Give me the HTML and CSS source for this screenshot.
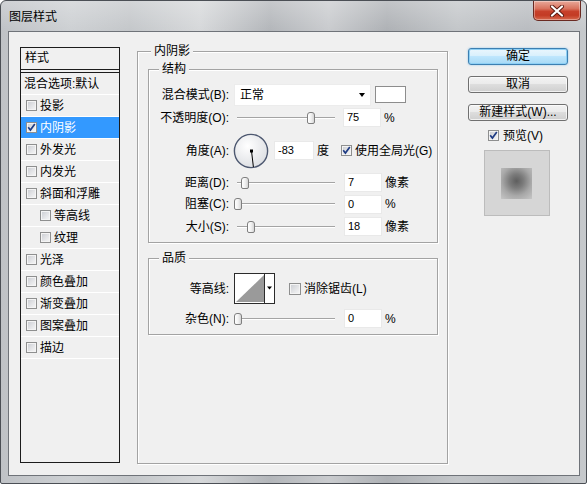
FILE: index.html
```html
<!DOCTYPE html>
<html lang="zh-CN">
<head>
<meta charset="utf-8">
<title>图层样式</title>
<link rel="stylesheet" href="styles.css">
</head>
<body>
<div class="window">
  <div class="titlebar">
    <span class="title">图层样式</span>
    <div class="close">
      <svg width="16" height="12" viewBox="0 0 16 12"><path d="M3 1.5 L13 10.5 M13 1.5 L3 10.5" stroke="#5a1a10" stroke-width="4" stroke-linecap="round"/><path d="M3 1.5 L13 10.5 M13 1.5 L3 10.5" stroke="#fff" stroke-width="2.2" stroke-linecap="round"/></svg>
    </div>
  </div>
  <div class="client">
    <div class="style-list">
      <div class="list-head">样式</div>
      <div class="list-item blend">混合选项:默认</div>
      <div class="list-item"><span class="cb"></span>投影</div>
      <div class="list-item selected"><span class="cb"><svg class="tick" width="9" height="9" viewBox="0 0 9 9"><path d="M1.2 4.2 L3.4 7 L7.8 1" fill="none" stroke="#1f3c84" stroke-width="1.7"/></svg></span>内阴影</div>
      <div class="list-item"><span class="cb"></span>外发光</div>
      <div class="list-item"><span class="cb"></span>内发光</div>
      <div class="list-item"><span class="cb"></span>斜面和浮雕</div>
      <div class="list-item sub"><span class="cb"></span>等高线</div>
      <div class="list-item sub"><span class="cb"></span>纹理</div>
      <div class="list-item"><span class="cb"></span>光泽</div>
      <div class="list-item"><span class="cb"></span>颜色叠加</div>
      <div class="list-item"><span class="cb"></span>渐变叠加</div>
      <div class="list-item"><span class="cb"></span>图案叠加</div>
      <div class="list-item"><span class="cb"></span>描边</div>
    </div>

    <div class="group outer">
      <div class="legend">内阴影</div>

      <div class="group inner structure">
        <div class="legend inner-legend">结构</div>

        <div class="row r-blend">
          <span class="label">混合模式(B):</span>
          <div class="select"><span class="select-text">正常</span><svg width="6" height="4" viewBox="0 0 6 4"><path d="M0 0 H6 L3 4 Z" fill="#000"/></svg></div>
          <span class="swatch"></span>
        </div>

        <div class="row r-opacity">
          <span class="label">不透明度(O):</span>
          <div class="slider"><span class="thumb" style="left:73px"></span></div>
          <span class="num">75</span>
          <span class="unit">%</span>
        </div>

        <div class="row r-angle">
          <span class="label">角度(A):</span>
          <svg class="dial" width="36" height="36" viewBox="0 0 36 36">
            <defs>
              <radialGradient id="dialfill" cx="40%" cy="35%" r="70%">
                <stop offset="0" stop-color="#ffffff"/>
                <stop offset="1" stop-color="#dcdee2"/>
              </radialGradient>
            </defs>
            <circle cx="18" cy="18" r="16.6" fill="url(#dialfill)" stroke="#4d5870" stroke-width="1.4"/>
            <line x1="18.5" y1="18" x2="20.4" y2="34" stroke="#000" stroke-width="1"/>
            <rect x="17" y="16.5" width="3" height="3" fill="#000"/>
          </svg>
          <span class="num num-angle">-83</span>
          <span class="unit deg">度</span>
          <span class="cb global-cb"><svg class="tick" width="9" height="9" viewBox="0 0 9 9"><path d="M1.2 4.2 L3.4 7 L7.8 1" fill="none" stroke="#1f3c84" stroke-width="1.7"/></svg></span>
          <span class="cb-text">使用全局光(G)</span>
        </div>

        <div class="row r-distance">
          <span class="label">距离(D):</span>
          <div class="slider"><span class="thumb" style="left:7px"></span></div>
          <span class="num">7</span>
          <span class="unit">像素</span>
        </div>

        <div class="row r-choke">
          <span class="label">阻塞(C):</span>
          <div class="slider"><span class="thumb" style="left:0px"></span></div>
          <span class="num">0</span>
          <span class="unit">%</span>
        </div>

        <div class="row r-size">
          <span class="label">大小(S):</span>
          <div class="slider"><span class="thumb" style="left:13px"></span></div>
          <span class="num">18</span>
          <span class="unit">像素</span>
        </div>
      </div>

      <div class="group inner quality">
        <div class="legend inner-legend">品质</div>

        <div class="row r-contour">
          <span class="label">等高线:</span>
          <svg class="contour" width="41" height="31" viewBox="0 0 41 31">
            <rect x="0.5" y="0.5" width="40" height="30" fill="#fff" stroke="#2b2b2b"/>
            <polygon points="2,29 30,2 30,29" fill="#9a9a9a"/>
            <line x1="30.5" y1="0.5" x2="30.5" y2="30.5" stroke="#2b2b2b"/>
            <polygon points="33,13.5 38,13.5 35.5,16.5" fill="#000"/>
          </svg>
          <span class="cb aa-cb"></span>
          <span class="cb-text">消除锯齿(L)</span>
        </div>

        <div class="row r-noise">
          <span class="label">杂色(N):</span>
          <div class="slider"><span class="thumb" style="left:0px"></span></div>
          <span class="num">0</span>
          <span class="unit">%</span>
        </div>
      </div>
    </div>

    <div class="side">
      <div class="btn btn-default">确定</div>
      <div class="btn">取消</div>
      <div class="btn">新建样式(W)...</div>
      <div class="preview-row">
        <span class="cb"><svg class="tick" width="9" height="9" viewBox="0 0 9 9"><path d="M1.2 4.2 L3.4 7 L7.8 1" fill="none" stroke="#1f3c84" stroke-width="1.7"/></svg></span>
        <span class="cb-text">预览(V)</span>
      </div>
      <div class="preview-box"><div class="preview-square"></div></div>
    </div>
  </div>
</div>
</body>
</html>
```

FILE: styles.css
```css
* { box-sizing: border-box; }

html, body {
  margin: 0;
  padding: 0;
  background: #ffffff;
}

body {
  font-family: "Liberation Sans", "Noto Sans CJK SC", sans-serif;
  font-size: 12px;
  line-height: 16px;
  color: #000;
}

.window {
  width: 587px;
  height: 484px;
  border: 1px solid #4b4f55;
  border-radius: 6px 6px 2px 2px;
  background:
    linear-gradient(180deg, rgba(255,255,255,0.25) 0, rgba(255,255,255,0) 30px),
    linear-gradient(90deg, #bfc2c6 0%, #cdd0d3 12%, #c4c7ca 22%, #d6d8da 34%, #b3b6ba 46%, #c9cbce 56%, #aeb1b5 66%, #c3c6c9 78%, #b9bcc0 90%, #c6c9cc 100%);
  overflow: hidden;
}

.titlebar {
  height: 30px;
  display: flex;
  align-items: flex-start;
  padding-left: 8px;
}

.title {
  margin-top: 8px;
  line-height: 16px;
  color: #000;
}

.close {
  margin-left: auto;
  margin-right: 5px;
  width: 48px;
  height: 20px;
  border: 1px solid #6a2a22;
  border-top: none;
  border-radius: 0 0 5px 5px;
  background: linear-gradient(180deg, #e9a99a 0%, #d9735e 40%, #c7402a 55%, #c33b24 75%, #d66a4f 100%);
  box-shadow: inset 0 0 0 1px rgba(255,255,255,0.35);
  display: flex;
  align-items: center;
  justify-content: center;
}

.client {
  margin-left: 7px;
  width: 572px;
  height: 445px;
  border: 1px solid #6f7379;
  background: #f0f0f0;
  display: flex;
  align-items: flex-start;
  padding: 15px 0 0 11px;
}

/* ---------- left style list ---------- */
.style-list {
  width: 100px;
  height: 416px;
  border: 1px solid #1c1c1c;
  background: #f0f0f0;
  flex: none;
}

.list-head {
  height: 22px;
  padding-left: 4px;
  line-height: 21px;
  border-bottom: 1px solid #1c1c1c;
}

.list-item {
  height: 22px;
  border-bottom: 1px solid #ffffff;
  display: flex;
  align-items: center;
  padding-left: 5px;
  line-height: 16px;
}

.list-item .cb { margin-right: 3px; }

.list-item.blend {
  margin-top: 2px;
  border-top: 1px solid #1c1c1c;
  height: 23px;
  padding-left: 3px;
}

.list-item.sub { padding-left: 19px; }

.list-item.selected {
  background: #3399ff;
  color: #ffffff;
}

/* ---------- checkboxes ---------- */
.cb {
  width: 11px;
  height: 11px;
  flex: none;
  border: 1px solid #8e8f8f;
  background: linear-gradient(135deg, #c9ccd1 0%, #e6e7e9 60%, #f7f7f7 100%);
  box-shadow: inset 0 0 0 1px #f4f4f4;
  display: inline-flex;
  align-items: center;
  justify-content: center;
  position: relative;
}

.cb .tick { display: block; }

.cb-text { margin-left: 3px; }

/* ---------- group boxes ---------- */
.group {
  border: 1px solid #a3a3a3;
  box-shadow: 1px 1px 0 #ffffff, inset 1px 1px 0 #ffffff;
}

.legend {
  width: max-content;
  margin: -9px 0 0 3px;
  padding: 0 3px;
  background: #f0f0f0;
  line-height: 16px;
}

.outer {
  width: 311px;
  height: 413px;
  margin: 4px 0 0 17px;
  padding-left: 10px;
  flex: none;
}

.inner {
  width: 290px;
}

.inner-legend { margin-left: 10px; }

.structure {
  margin-top: 10px;
  padding-bottom: 4px;
}

.quality {
  margin-top: 15px;
  padding-bottom: 2px;
}

.row {
  display: flex;
  align-items: center;
}

.label {
  width: 80px;
  flex: none;
  text-align: right;
  white-space: nowrap;
}

.r-blend { height: 23px; margin-top: 6px; }
.r-opacity { height: 23px; }
.r-angle { height: 43px; }
.r-distance { height: 21px; }
.r-choke { height: 22px; }
.r-size { height: 23px; }

.r-contour { height: 33px; margin-top: 6px; }
.r-noise { height: 27px; }

.select {
  margin-left: 5px;
  width: 137px;
  height: 22px;
  background: #ffffff;
  border: 1px solid #ececec;
  display: flex;
  align-items: center;
  padding: 0 5px 0 5px;
}

.select-text { flex: 1; }

.swatch {
  margin-left: 4px;
  width: 31px;
  height: 17px;
  background: #ffffff;
  border: 1px solid #8d8d8d;
}

.slider {
  margin-left: 5px;
  width: 104px;
  height: 14px;
  position: relative;
  flex: none;
}

.slider::before {
  content: "";
  position: absolute;
  left: 3px;
  right: 3px;
  top: 6px;
  height: 1px;
  background: #a4a4a4;
  box-shadow: 0 1px 0 #ffffff;
}

.thumb {
  position: absolute;
  top: 1px;
  width: 8px;
  height: 12px;
  border: 1px solid #7f7f7f;
  border-radius: 3px 3px 2px 2px;
  background: linear-gradient(90deg, #ffffff 0%, #f2f2f2 50%, #d5d5d5 100%);
}

.num {
  margin-left: 6px;
  width: 38px;
  height: 19px;
  background: #ffffff;
  border: 1px solid #e9e9e9;
  padding-left: 3px;
  font-size: 11px;
  line-height: 17px;
  flex: none;
}

.unit { margin-left: 3px; }

.r-opacity .num { margin-left: 5px; }

.dial {
  display: block;
  margin-left: 4px;
  flex: none;
}

.num-angle {
  margin-left: 5px;
  width: 40px;
}

.deg { margin-left: 3px; }

.global-cb { margin-left: 12px; }

.contour {
  display: block;
  margin-left: 5px;
  flex: none;
}

.aa-cb {
  margin-left: 14px;
  width: 12px;
  height: 12px;
}

.r-contour .cb-text { margin-left: 3px; }

/* ---------- right side ---------- */
.side {
  width: 100px;
  margin: 1px 0 0 20px;
  flex: none;
}

.btn {
  height: 17px;
  border: 1px solid #707070;
  border-radius: 3px;
  background: linear-gradient(180deg, #f2f2f2 0%, #ebebeb 45%, #dddddd 50%, #cfcfcf 100%);
  box-shadow: inset 0 0 0 1px rgba(255,255,255,0.7);
  text-align: center;
  line-height: 15px;
  white-space: nowrap;
}

.btn + .btn { margin-top: 11px; }

.btn-default {
  border-color: #3c7fb1;
  background: linear-gradient(180deg, #eaf6fd 0%, #d9f0fc 45%, #bee6fd 50%, #a7d9f5 100%);
  box-shadow: inset 0 0 0 1px #8ed0f5, 0 0 2px rgba(60,160,230,0.6);
}

.preview-row {
  margin-top: 8px;
  height: 13px;
  display: flex;
  align-items: center;
  padding-left: 20px;
}

.preview-row .cb-text { margin-left: 4px; }

.preview-box {
  margin: 8px 0 0 16px;
  width: 66px;
  height: 66px;
  background: #d6d6d6;
  border: 1px solid #bcbcbc;
  padding: 17px 0 0 16px;
}

.preview-square {
  width: 31px;
  height: 31px;
  background: radial-gradient(circle at 50% 42%, #5e5e5e 0%, #7c7c7c 30%, #a8a8a8 62%, #c6c6c6 100%);
}
```
